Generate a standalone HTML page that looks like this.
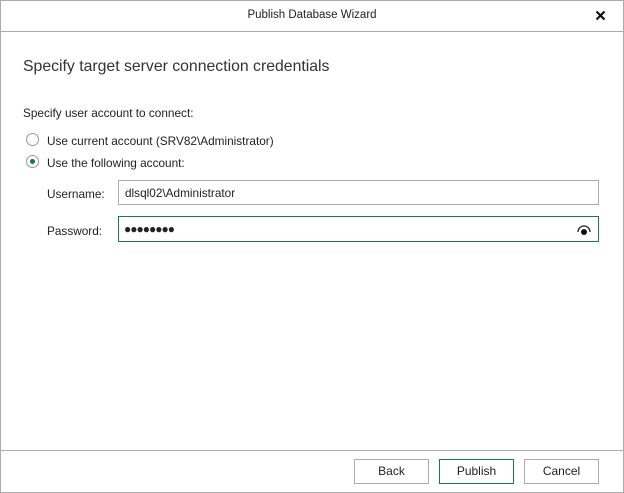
<html><head><style>
body{margin:0;width:624px;height:493px;background:#fff;font-family:"Liberation Sans",sans-serif;color:#222;position:relative;overflow:hidden}
.win{position:absolute;left:0;top:0;width:622px;height:491px;border:1px solid #acacac}
.t{position:absolute;white-space:nowrap}
.line{position:absolute;left:0;width:622px;height:1px;background:#acacac}
.box{position:absolute;box-sizing:border-box;border:1px solid #acacac;background:#fff}
.btn{position:absolute;box-sizing:border-box;border:1px solid #acacac;width:75px;height:25px;top:458px;font-size:12px;text-align:center;line-height:23px}
.rad{position:absolute;width:13px;height:13px;border:1px solid #999;border-radius:50%;box-sizing:border-box;background:#fff}
</style></head><body>
<div class="win">
<div class="t" style="left:0;width:622px;text-align:center;top:8px;font-size:11.5px">Publish Database Wizard</div>
<svg style="position:absolute;left:594px;top:9px" width="11" height="11"><path d="M1.5 1.5L9.5 9.5M9.5 1.5L1.5 9.5" stroke="#111" stroke-width="2.2"/></svg>
<div class="line" style="top:30px"></div>
<div class="t" style="left:22px;top:57px;font-size:15.8px;color:#333">Specify target server connection credentials</div>
<div class="t" style="left:22px;top:105px;font-size:11.8px">Specify user account to connect:</div>
<div class="rad" style="left:25px;top:132px"></div>
<div class="t" style="left:46px;top:133px;font-size:11.8px">Use current account (SRV82\Administrator)</div>
<div class="rad" style="left:25px;top:154px"><div style="position:absolute;left:3px;top:3px;width:5px;height:5px;border-radius:50%;background:#107c41"></div></div>
<div class="t" style="left:46px;top:155px;font-size:11.8px">Use the following account:</div>
<div class="t" style="left:46px;top:186px;font-size:11.8px">Username:</div>
<div class="box" style="left:117px;top:179px;width:481px;height:25px"></div>
<div class="t" style="left:124px;top:185px;font-size:11.8px">dlsql02\Administrator</div>
<div class="t" style="left:46px;top:223px;font-size:11.8px">Password:</div>
<div class="box" style="left:117px;top:215px;width:481px;height:26px;border-color:#1f7a3f"></div>
<div class="t" style="left:123px;top:221px;font-size:12px;letter-spacing:-1px">●●●●●●●●</div>
<svg style="position:absolute;left:575px;top:221px" width="16" height="14"><path d="M2 10A6 6 0 0 1 14 10" fill="none" stroke="#222" stroke-width="1.3"/><circle cx="8" cy="10" r="3" fill="#111"/></svg>
<div class="line" style="top:449px"></div>
<div class="btn" style="left:353px">Back</div>
<div class="btn" style="left:438px;border-color:#1f7a3f">Publish</div>
<div class="btn" style="left:523px">Cancel</div>
</div>
</body></html>
